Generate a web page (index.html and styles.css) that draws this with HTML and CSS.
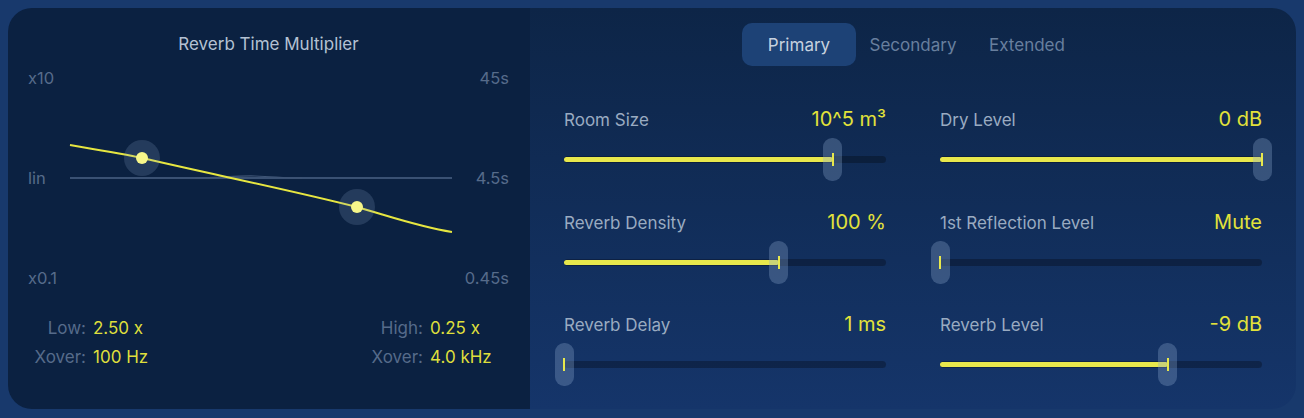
FILE: index.html
```html
<!DOCTYPE html>
<html lang="en">
<head>
  <meta charset="UTF-8">
  <meta name="viewport" content="width=device-width, initial-scale=1.0">
  <title>Reverb</title>
  <link rel="stylesheet" href="styles.css">
</head>
<body>
  <div class="reverb">
    <section class="curve-panel">
      <h2 class="curve-title">Reverb Time Multiplier</h2>
      <div class="graph">
        <div class="axis axis-left"><span>x10</span><span>lin</span><span>x0.1</span></div>
        <svg class="curve" width="382" height="220" viewBox="0 0 382 220">
          <line x1="0" y1="110" x2="382" y2="110" stroke="#4b6284" stroke-width="1.5"/>
          <path d="M125 110 C150 110 165 107.5 185 108 C205 108.5 212 110 232 110" fill="none" stroke="#3e5475" stroke-width="1.2"/>
          <path d="M0 77 C30 82 55 86 72 90 C150 108 220 122 287 139 C325 150 350 159 382 164" fill="none" stroke="#e6e641" stroke-width="2"/>
          <circle cx="72" cy="90" r="18" fill="#8aa6c8" fill-opacity="0.2"/>
          <circle cx="72" cy="90" r="6" fill="#f7f78a"/>
          <circle cx="287" cy="139" r="18" fill="#8aa6c8" fill-opacity="0.2"/>
          <circle cx="287" cy="139" r="6" fill="#f7f78a"/>
        </svg>
        <div class="axis axis-right"><span>45s</span><span>4.5s</span><span>0.45s</span></div>
      </div>
      <div class="stats">
        <div class="stat-group">
          <span class="stat-label">Low:</span><span class="stat-value">2.50 x</span>
          <span class="stat-label">Xover:</span><span class="stat-value">100 Hz</span>
        </div>
        <div class="stat-group">
          <span class="stat-label">High:</span><span class="stat-value">0.25 x</span>
          <span class="stat-label">Xover:</span><span class="stat-value">4.0 kHz</span>
        </div>
      </div>
    </section>

    <section class="params-panel">
      <div class="tabs">
        <button class="tab active">Primary</button>
        <button class="tab">Secondary</button>
        <button class="tab">Extended</button>
      </div>
      <div class="params">
        <div class="param">
          <div class="param-head"><span class="param-name">Room Size</span><span class="param-value">10^5 m³</span></div>
          <div class="slider">
            <div class="track"></div>
            <div class="fill" style="width: 83.5%"></div>
            <div class="thumb" style="left: 83.5%"></div>
          </div>
        </div>
        <div class="param">
          <div class="param-head"><span class="param-name">Dry Level</span><span class="param-value">0 dB</span></div>
          <div class="slider">
            <div class="track"></div>
            <div class="fill" style="width: 100%"></div>
            <div class="thumb" style="left: 100%"></div>
          </div>
        </div>
        <div class="param">
          <div class="param-head"><span class="param-name">Reverb Density</span><span class="param-value">100 %</span></div>
          <div class="slider">
            <div class="track"></div>
            <div class="fill" style="width: 66.7%"></div>
            <div class="thumb" style="left: 66.7%"></div>
          </div>
        </div>
        <div class="param">
          <div class="param-head"><span class="param-name">1st Reflection Level</span><span class="param-value">Mute</span></div>
          <div class="slider">
            <div class="track"></div>
            <div class="fill" style="width: 0%"></div>
            <div class="thumb" style="left: 0%"></div>
          </div>
        </div>
        <div class="param">
          <div class="param-head"><span class="param-name">Reverb Delay</span><span class="param-value">1 ms</span></div>
          <div class="slider">
            <div class="track"></div>
            <div class="fill" style="width: 0%"></div>
            <div class="thumb" style="left: 0%"></div>
          </div>
        </div>
        <div class="param">
          <div class="param-head"><span class="param-name">Reverb Level</span><span class="param-value">-9 dB</span></div>
          <div class="slider">
            <div class="track"></div>
            <div class="fill" style="width: 70.8%"></div>
            <div class="thumb" style="left: 70.8%"></div>
          </div>
        </div>
      </div>
    </section>
  </div>
</body>
</html>
```

FILE: styles.css
```css
body {
  margin: 0;
  padding: 8px;
  background: #18396c;
  font-family: Inter, "Open Sans", sans-serif;
}
.reverb {
  display: flex;
  height: 401px;
  border-radius: 24px;
  overflow: hidden;
}

/* left: curve editor */
.curve-panel {
  width: 522px;
  box-sizing: border-box;
  padding: 26px 21px 0 20px;
  background: #0b2141;
}
.curve-title {
  margin: 0;
  font-size: 17px;
  font-weight: 400;
  line-height: 20px;
  text-align: center;
  color: #b4c1d3;
}
.graph {
  display: flex;
  height: 220px;
  margin-top: 14px;
}
.axis {
  display: flex;
  flex-direction: column;
  justify-content: space-between;
  font-size: 16.5px;
  line-height: 20px;
  color: #566b8a;
}
.axis-left {
  width: 42px;
}
.axis-right {
  flex: 1;
  text-align: right;
}
.curve {
  display: block;
  overflow: visible;
}
.stats {
  display: flex;
  margin-top: 25px;
}
.stat-group {
  display: grid;
  grid-template-columns: 58px auto;
  grid-auto-rows: 29px;
  align-items: center;
  column-gap: 7px;
  font-size: 17px;
}
.stat-group:first-child {
  width: 337px;
}
.stat-label {
  justify-self: end;
  color: #566b8a;
}
.stat-value {
  color: #dfdf3c;
}

/* right: parameters */
.params-panel {
  flex: 1;
  padding: 15px 34px 0;
  background: linear-gradient(#0d2547, #15356a);
}
.tabs {
  display: flex;
  justify-content: center;
}
.tab {
  width: 114px;
  height: 43px;
  border: none;
  border-radius: 10px;
  background: none;
  font-family: inherit;
  font-size: 17px;
  color: #687f9e;
  cursor: pointer;
}
.tab.active {
  background: #1d4276;
  color: #c6d1df;
}
.params {
  display: grid;
  grid-template-columns: 1fr 1fr;
  column-gap: 54px;
  row-gap: 28.5px;
  margin-top: 41px;
}
.param-head {
  display: flex;
  justify-content: space-between;
  align-items: baseline;
  height: 22px;
}
.param-name {
  font-size: 17px;
  color: #9aabc1;
}
.param-value {
  font-size: 20px;
  color: #e2e23a;
}
.slider {
  position: relative;
  height: 43px;
  margin-top: 9px;
}
.track {
  position: absolute;
  left: 0;
  right: 0;
  top: 18px;
  height: 7px;
  border-radius: 4px;
  background: rgba(0, 0, 0, 0.28);
}
.fill {
  position: absolute;
  left: 0;
  top: 19px;
  height: 5px;
  border-radius: 3px;
  background: #e8e84c;
}
.thumb {
  position: absolute;
  top: 0;
  width: 19px;
  height: 43px;
  margin-left: -9.5px;
  border-radius: 9px;
  background: rgba(140, 168, 205, 0.32);
}
.thumb::after {
  content: "";
  position: absolute;
  left: 8.5px;
  top: 15px;
  width: 2px;
  height: 13px;
  background: #e8e84c;
}
```
